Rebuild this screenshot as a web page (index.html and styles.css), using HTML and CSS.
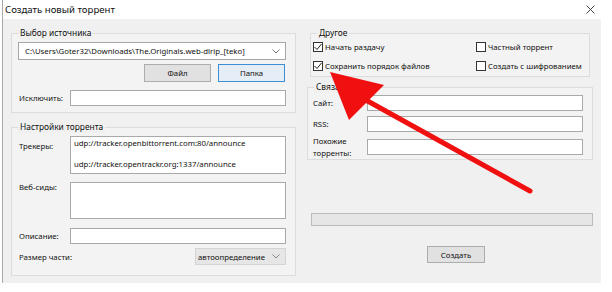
FILE: index.html
```html
<!DOCTYPE html>
<html lang="ru">
<head>
    <meta charset="UTF-8">
    <title>Создать новый торрент</title>
    <link rel="stylesheet" href="styles.css">
</head>
<body>

<div class="window">
    <div class="titlebar">
        <span>Создать новый торрент</span>
        <svg class="close" width="9" height="9" viewBox="0 0 9 9"><path d="M0.5 0.5 L8.5 8.5 M8.5 0.5 L0.5 8.5" stroke="#444" stroke-width="1"/></svg>
    </div>

    <div class="content">
        <!-- левая колонка -->
        <div class="col-left">
            <div class="group group-source">
                <div class="group-title">Выбор источника</div>
                <div class="combo">
                    <span>C:\Users\Goter32\Downloads\The.Originals.web-dlrip_[teko]</span>
                    <svg width="8" height="5" viewBox="0 0 8 5"><polyline points="0.5,0.5 4,4 7.5,0.5" fill="none" stroke="#777"/></svg>
                </div>
                <div class="btn-row">
                    <button class="btn">Файл</button>
                    <button class="btn btn-focus">Папка</button>
                </div>
                <div class="row row-exclude">
                    <label for="exclude">Исключить:</label>
                    <input type="text" id="exclude" class="field">
                </div>
            </div>

            <div class="group group-settings">
                <div class="group-title">Настройки торрента</div>
                <div class="row row-top">
                    <label class="lbl-trackers" for="trackers">Трекеры:</label>
                    <textarea id="trackers" class="area area-trackers">udp://tracker.openbittorrent.com:80/announce

udp://tracker.opentrackr.org:1337/announce</textarea>
                </div>
                <div class="row row-top row-seeds">
                    <label class="lbl-seeds" for="seeds">Веб-сиды:</label>
                    <textarea id="seeds" class="area area-seeds"></textarea>
                </div>
                <div class="row row-desc">
                    <label for="desc">Описание:</label>
                    <input type="text" id="desc" class="field">
                </div>
                <div class="row row-piece">
                    <label>Размер части:</label>
                    <div class="select">
                        <span>автоопределение</span>
                        <svg width="8" height="5" viewBox="0 0 8 5"><polyline points="0.5,0.5 4,4 7.5,0.5" fill="none" stroke="#888"/></svg>
                    </div>
                </div>
            </div>
        </div>

        <!-- правая колонка -->
        <div class="col-right">
            <div class="group group-other">
                <div class="group-title">Другое</div>
                <div class="checks">
                    <div class="check"><span class="box"><svg width="8" height="8" viewBox="0 0 8 8"><polyline points="0.5,4 3,6.5 7.5,1" fill="none" stroke="#222" stroke-width="1"/></svg></span>Начать раздачу</div>
                    <div class="check"><span class="box"></span>Частный торрент</div>
                    <div class="check check-2"><span class="box"><svg width="8" height="8" viewBox="0 0 8 8"><polyline points="0.5,4 3,6.5 7.5,1" fill="none" stroke="#222" stroke-width="1"/></svg></span>Сохранить порядок файлов</div>
                    <div class="check check-2"><span class="box"></span>Создать с шифрованием</div>
                </div>
            </div>

            <div class="group group-links">
                <div class="group-title">Связано</div>
                <div class="row row-site">
                    <label for="site">Сайт:</label>
                    <input type="text" id="site" class="field">
                </div>
                <div class="row row-rss">
                    <label for="rss">RSS:</label>
                    <input type="text" id="rss" class="field">
                </div>
                <div class="row row-similar">
                    <label for="similar">Похожие<br>торренты:</label>
                    <input type="text" id="similar" class="field">
                </div>
            </div>

            <div class="progress"></div>
            <button class="btn btn-create">Создать</button>
        </div>
    </div>
</div>

<svg class="arrow" width="612" height="292" viewBox="0 0 612 292">
    <line x1="530" y1="191" x2="364" y2="99" stroke="#f01010" stroke-width="5" stroke-linecap="round"/>
    <polygon points="330,72 384,85 349,120" fill="#f01010"/>
</svg>

</body>
</html>
```

FILE: styles.css
```css
body {
    margin: 0;
    width: 612px;
    height: 292px;
    overflow: hidden;
    position: relative;
    background: #fff;
    font-family: "Noto Sans", sans-serif;
    font-size: 7.8px;
    color: #111;
}

.window {
    margin-left: 2px;
    width: 598px;
    border-left: 1px solid #a8a8a8;
}

.titlebar {
    height: 19px;
    display: flex;
    align-items: center;
    justify-content: space-between;
    padding: 0 6px 0 2px;
    background: #fff;
    font-size: 9.6px;
}

.content {
    height: 264px;
    box-sizing: border-box;
    display: flex;
    gap: 11px;
    padding: 0 8px;
    background: #f0f0f0;
}

.col-left {
    width: 285px;
}

.col-right {
    width: 286px;
}

/* рамки групп */
.group {
    border: 1px solid #dcdcdc;
    background: #f3f3f3;
}

.group-title {
    width: fit-content;
    margin: -7px 0 0 6px;
    padding: 0 2px;
    line-height: 12px;
    font-size: 8.4px;
    background: #f0f0f0;
}

.group-source {
    margin-top: 14px;
    padding-bottom: 6px;
}

.group-settings {
    margin-top: 14px;
    padding-bottom: 10px;
}

.group-other {
    margin: 14px 3px 0 3px;
    padding-bottom: 4px;
}

.group-links {
    margin-top: 10px;
}

/* поля */
.combo, .select {
    display: flex;
    align-items: center;
    justify-content: space-between;
    box-sizing: border-box;
}

.combo {
    height: 18px;
    margin: 3px 9px 0 6px;
    padding: 0 5px 0 6px;
    background: #fff;
    border: 1px solid #a6a6a6;
}

.select {
    width: 91px;
    height: 17px;
    padding: 0 5px 0 2px;
    background: #e6e6e6;
    border: 1px solid #d4d4d4;
}

.field, .area {
    box-sizing: border-box;
    width: 216px;
    margin: 0;
    background: #fff;
    border: 1px solid #a9a9a9;
    font-family: inherit;
    font-size: inherit;
    color: inherit;
}

.field {
    height: 16px;
}

.area {
    resize: none;
    overflow: hidden;
    padding: 1px 3px;
    line-height: 10.5px;
}

.area-trackers {
    height: 38px;
}

.area-seeds {
    height: 37px;
}

.row {
    display: flex;
    align-items: center;
    padding-left: 7px;
}

.row label {
    width: 51px;
    line-height: 12px;
}

.row-top {
    align-items: flex-start;
    margin-top: 3px;
}

.lbl-trackers {
    margin-top: 4px;
}

.lbl-seeds {
    margin-top: -1px;
}

.row-seeds {
    margin-top: 8px;
}

.row-exclude {
    margin-top: 8px;
}

.row-desc {
    margin-top: 9px;
}

.row-piece {
    margin-top: 4px;
    justify-content: space-between;
    padding-right: 9px;
}

.row-piece label {
    width: auto;
}

.group-links .row {
    padding-left: 5px;
}

.group-links .row label {
    width: 54px;
}

.row-site {
    margin-top: 2px;
}

.row-rss {
    margin-top: 5px;
}

.row-similar {
    margin-top: 3px;
}

/* кнопки */
.btn-row {
    display: flex;
    justify-content: flex-end;
    gap: 7px;
    margin-top: 4px;
    padding-right: 10px;
}

.btn {
    box-sizing: border-box;
    width: 67px;
    height: 18px;
    padding: 0;
    background: #e1e1e1;
    border: 1px solid #adadad;
    font-family: inherit;
    font-size: inherit;
    color: inherit;
}

.btn-focus {
    background: #e5eef7;
    border-color: #3c8fd6;
}

.btn-create {
    display: block;
    width: 58px;
    height: 17px;
    margin: 20px 0 0 120px;
}

/* чекбоксы */
.checks {
    display: grid;
    grid-template-columns: 163px 1fr;
    padding-left: 2px;
}

.check {
    display: flex;
    align-items: center;
    gap: 2px;
    line-height: 12px;
    margin-top: 2px;
}

.check-2 {
    margin-top: 7px;
}

.box {
    box-sizing: border-box;
    flex: none;
    width: 10px;
    height: 10px;
    border: 1px solid #333;
    background: #fff;
    display: flex;
    align-items: center;
    justify-content: center;
}

.progress {
    height: 13px;
    box-sizing: border-box;
    margin: 53px 0 0 4px;
    background: #e6e6e6;
    border: 1px solid #bcbcbc;
}

.arrow {
    position: absolute;
    top: 0;
    left: 0;
    pointer-events: none;
}
```
